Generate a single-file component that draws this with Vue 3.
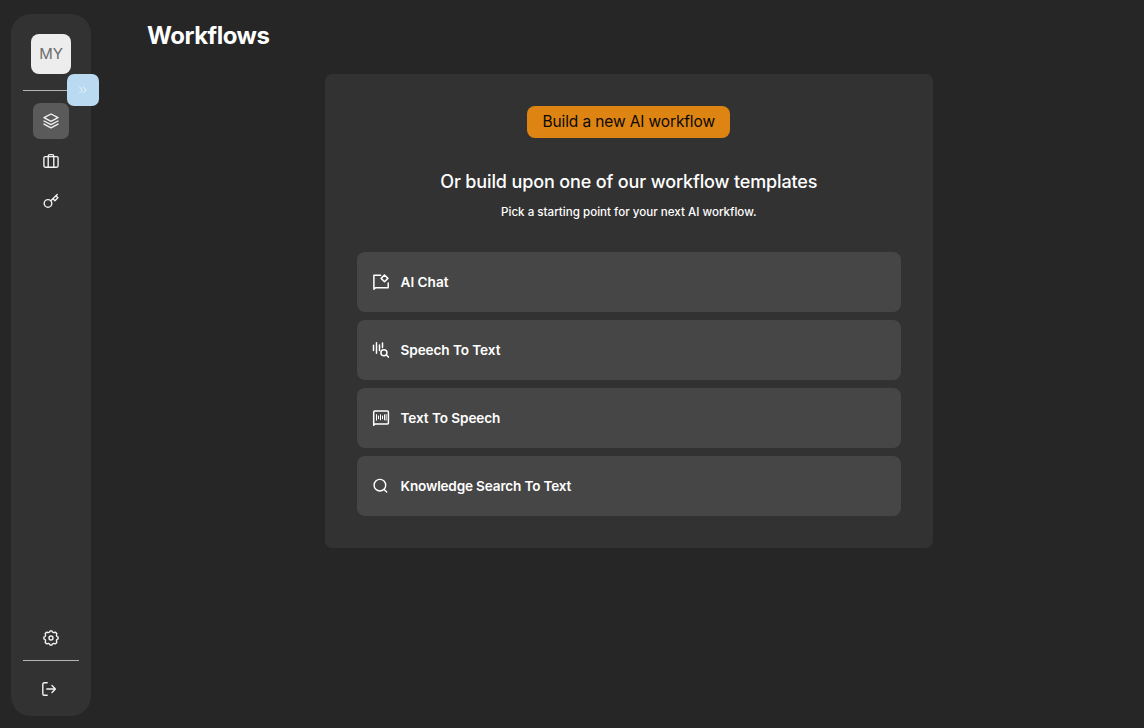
<script setup>
const templates = [
  { id: 'chat', label: 'AI Chat' },
  { id: 'stt', label: 'Speech To Text' },
  { id: 'tts', label: 'Text To Speech' },
  { id: 'search', label: 'Knowledge Search To Text' },
]
</script>

<template>
  <div class="app">
    <aside class="sidebar">
      <div class="avatar">MY</div>
      <div class="rule top"></div>
      <button class="expand" aria-label="Expand sidebar">
        <svg width="12" height="12" viewBox="0 0 12 12"><path d="M2.6 3 5.4 6 2.6 9M6.4 3 9.2 6 6.4 9" /></svg>
      </button>
      <nav class="nav">
        <a class="item active">
          <svg width="18" height="18" viewBox="0 0 18 18">
            <path d="M9 2 16 5.7 9 9.4 2 5.7ZM2 9l7 3.7L16 9M2 12.1l7 3.7 7-3.7" />
          </svg>
        </a>
        <a class="item">
          <svg width="18" height="18" viewBox="0 0 18 18">
            <rect x="1.9" y="4.6" width="14.2" height="10.6" rx="1.4" />
            <path d="M6.2 15V4.2Q6.2 2.6 7.7 2.6h2.6q1.5 0 1.5 1.6V15" />
          </svg>
        </a>
        <a class="item">
          <svg width="18" height="18" viewBox="0 0 18 18">
            <circle cx="6" cy="11.4" r="3.8" />
            <path d="M8.8 8.7 15.2 2.6M10.9 6.7l2 2 3-2.9-2-2" />
          </svg>
        </a>
      </nav>
      <div class="bottom">
        <a class="item settings">
          <svg width="18" height="18" viewBox="0 0 18 18">
            <path d="M7.5 3.1 8.2 1.9h1.6l.7 1.2q.7.7 1.6.4l1.4-.3 1.3 1.3-.3 1.4q-.3.9.4 1.6l1.2.7v1.6l-1.2.7q-.7.7-.4 1.6l.3 1.4-1.3 1.3-1.4-.3q-.9-.3-1.6.4l-.7 1.2H8.2l-.7-1.2q-.7-.7-1.6-.4l-1.4.3-1.3-1.3.3-1.4q.3-.9-.4-1.6l-1.2-.7V8.2l1.2-.7q.7-.7.4-1.6l-.3-1.4 1.3-1.3 1.4.3q.9.3 1.6-.4Z" />
            <circle cx="9" cy="9" r="2" />
          </svg>
        </a>
        <div class="rule"></div>
        <a class="item logout">
          <svg width="18" height="18" viewBox="0 0 18 18">
            <path d="M7.2 2.8H4.3Q2.8 2.8 2.8 4.3v9.4q0 1.5 1.5 1.5h2.9M6.8 9h8.6M12 5.6 15.4 9 12 12.4" />
          </svg>
        </a>
      </div>
    </aside>

    <main class="main">
      <h1>Workflows</h1>
      <section class="panel">
        <button class="build"><span>Build a new AI workflow</span></button>
        <h2>Or build upon one of our workflow templates</h2>
        <p>Pick a starting point for your next AI workflow.</p>
        <ul class="list">
          <li v-for="t in templates" :key="t.id">
            <svg v-if="t.id === 'chat'" width="18" height="18" viewBox="0 0 18 18">
              <path d="M8.6 2.2H1.9v14.1l1.7-1.6h12.6V10" />
              <path d="M12.5 2 15.9 5.4 12.5 8.8 9.1 5.4Z" />
            </svg>
            <svg v-else-if="t.id === 'stt'" width="18" height="18" viewBox="0 0 18 18">
              <path d="M1.5 4.2v5.2M4.5 1.7v10.6M7.5 4v5.4M10.5 1.9v4.6M14.4 14l2 2.1" />
              <circle cx="11.9" cy="11.7" r="3" />
            </svg>
            <svg v-else-if="t.id === 'tts'" width="18" height="18" viewBox="0 0 18 18">
              <path d="M2.7 1.9h12.7q1 0 1 1v11q0 1-1 1H3.2L1.7 16.3V2.9q0-1 1-1Z" />
              <path class="bars" d="M4.5 5.6v5.6M6.5 7v2.8M8.5 5.8v5M10.5 7v2.8M12.5 5.8v5M14.1 5.6v5.6" />
            </svg>
            <svg v-else class="search" width="18" height="18" viewBox="0 0 18 18">
              <circle cx="7.9" cy="8.2" r="5.8" />
              <path d="m12.1 12.5 2.6 2.6" />
            </svg>
            <span :class="['label', t.id]">{{ t.label }}</span>
          </li>
        </ul>
      </section>
    </main>
  </div>
</template>

<style>
body {
  background: #262626;
}
</style>

<style scoped>
.app {
  display: flex;
  box-sizing: border-box;
  width: 1144px;
  height: 728px;
  padding: 14px 0 12px 11px;
  overflow: hidden;
  background: #262626;
  color: #fff;
  font-family: Inter, "Open Sans", sans-serif;
}
svg {
  display: block;
  flex: none;
  fill: none;
  stroke: currentColor;
  stroke-width: 1.4;
  stroke-linecap: round;
  stroke-linejoin: round;
}
.sidebar {
  position: relative;
  display: flex;
  flex-direction: column;
  align-items: center;
  box-sizing: border-box;
  flex: none;
  width: 80px;
  height: 702px;
  padding: 20px 0 9px;
  border-radius: 20px;
  background: #323232;
}
.avatar {
  display: flex;
  align-items: center;
  justify-content: center;
  box-sizing: border-box;
  width: 40px;
  height: 40px;
  padding-bottom: 2px;
  border-radius: 8px;
  background: #ededed;
  color: #6c6c6c;
  font-size: 15px;
}
.rule {
  width: 56px;
  height: 1px;
  background: #b5b5b5;
}
.rule.top {
  margin-top: 16px;
}
.expand {
  position: absolute;
  top: 60px;
  left: 56px;
  display: flex;
  align-items: center;
  justify-content: center;
  width: 32px;
  height: 32px;
  padding: 0;
  border: 0;
  border-radius: 7px;
  background: #b9daf0;
  color: #eaf6ff;
}
.expand svg {
  stroke-width: 1;
}
.nav {
  display: flex;
  flex-direction: column;
  gap: 4px;
  margin-top: 12px;
}
.item {
  display: flex;
  align-items: center;
  justify-content: center;
  width: 36px;
  height: 36px;
  border-radius: 7px;
  color: #f2f2f2;
}
.item.active {
  background: #5a5a5a;
}
.bottom {
  display: flex;
  flex-direction: column;
  align-items: center;
  margin-top: auto;
}
.settings {
  margin-bottom: 4px;
}
.logout {
  margin-top: 10px;
  padding-right: 4px;
  width: 32px;
}
.main {
  flex: 1;
  padding-left: 56px;
}
h1,
h2,
p,
ul {
  margin: 0;
  padding: 0;
}
h1 {
  height: 60px;
  padding-top: 6px;
  box-sizing: border-box;
  font-size: 24px;
  line-height: 32px;
  font-weight: 700;
  letter-spacing: -0.48px;
}
.panel {
  display: flex;
  flex-direction: column;
  align-items: center;
  box-sizing: border-box;
  width: 607.5px;
  height: 474px;
  margin-left: 178px;
  padding: 32px;
  border-radius: 7px;
  background: #323232;
}
.build {
  display: flex;
  align-items: center;
  justify-content: center;
  width: 203px;
  height: 32px;
  padding: 0;
  border: 0;
  border-radius: 8px;
  background: #dd8413;
  color: #0b0805;
  font: 400 15.5px/32px Inter, sans-serif;
  letter-spacing: -0.13px;
  white-space: nowrap;
}
h2 {
  margin-top: 32px;
  font-size: 18px;
  line-height: 24px;
  font-weight: 500;
  letter-spacing: -0.14px;
  white-space: nowrap;
}
p {
  margin-top: 8px;
  font-size: 11.6px;
  line-height: 20px;
  font-weight: 500;
  white-space: nowrap;
}
.list {
  display: flex;
  flex-direction: column;
  align-self: flex-start;
  gap: 8px;
  width: 544px;
  margin-top: 30px;
  list-style: none;
}
li {
  display: flex;
  align-items: center;
  gap: 10.5px;
  box-sizing: border-box;
  height: 60px;
  padding: 0 15px;
  border-radius: 8px;
  background: #464646;
  font-size: 13.6px;
  font-weight: 600;
}
.label.stt,
.label.tts {
  letter-spacing: -0.09px;
}
.label.search {
  letter-spacing: -0.18px;
}
li svg {
  stroke-width: 1.5;
}
li svg .bars {
  stroke-width: 1;
}
li svg.search {
  stroke-width: 1.4;
}
</style>
